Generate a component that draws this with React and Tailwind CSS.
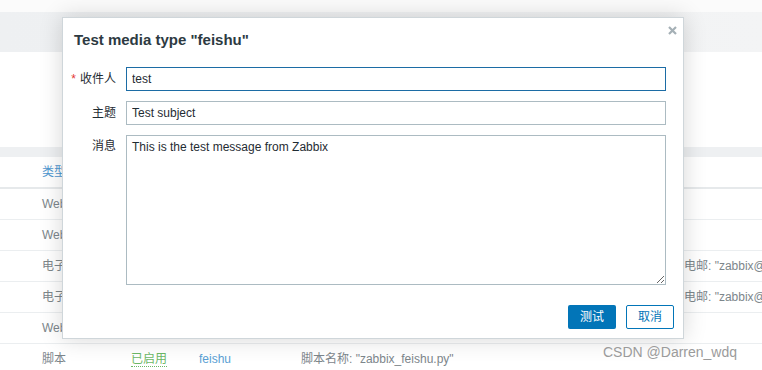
import React from "react";

const font = { fontFamily: '"Liberation Sans", Arial, "Noto Sans CJK SC", sans-serif' };

function Row({ type, status, name, detail, right }) {
  return (
    <div className="grid h-[31px] grid-cols-[89px_68px_102px_383px_1fr] items-center border-b border-[#ebeef0] pl-[42px] text-[12px] text-[#7d868b] whitespace-nowrap overflow-hidden">
      <div>{type}</div>
      <div>
        {status && (
          <span className="text-[#6cb866] border-b border-dotted border-[#6cb866] leading-[14px]">{status}</span>
        )}
      </div>
      <div className="text-[#5a9fd4]">{name}</div>
      <div>{detail}</div>
      <div className="overflow-hidden">{right}</div>
    </div>
  );
}

export default function App() {
  return (
    <div className="relative h-[370px] w-[762px] overflow-hidden bg-white" style={font}>
      {/* background page */}
      <div className="h-[12px] bg-[#fbfbfb]" />
      <div className="h-[40px] bg-gradient-to-r from-[#eef0f2] to-[#f3f4f5]" />
      <div className="h-[95px] bg-white" />
      <div className="h-[10px] bg-[#eef0f2]" />
      <div className="flex h-[32px] items-center border-b-2 border-[#e6e9eb] pl-[42px] text-[12px] text-[#4f97d0]">
        类型
      </div>
      <Row type="Webhook" />
      <Row type="Webhook" />
      <Row type="电子邮件" right={'电邮: "zabbix@example.com"'} />
      <Row type="电子邮件" right={'电邮: "zabbix@example.com"'} />
      <Row type="Webhook" />
      <Row type="脚本" status="已启用" name="feishu" detail={'脚本名称: "zabbix_feishu.py"'} />

      {/* modal */}
      <div className="absolute left-[62px] top-[17px] flex h-[322px] w-[622px] flex-col border border-[#cfd6da] bg-white shadow-[0_0_22px_rgba(0,0,0,0.16)]">
        <div className="relative px-[11px] pt-[13px]">
          <h4 className="text-[15px] font-bold leading-[18px] text-[#2d3a42]">Test media type "feishu"</h4>
          <button className="absolute right-[6px] top-[7px] flex h-[10px] w-[10px] items-center justify-center">
            <svg width="9" height="9" viewBox="0 0 9 9">
              <path d="M1 1L8 8M8 1L1 8" stroke="#a5b0b6" strokeWidth="2.2" />
            </svg>
          </button>
        </div>
        <div className="mt-[18px] grid grid-cols-[42px_540px] gap-x-[10px] gap-y-[10px] pl-[11px] text-[12px] text-[#1f2c33]">
          <label className="flex h-[24px] items-center justify-end whitespace-nowrap">
            <span className="mr-[4px] text-[#e33734]">*</span>收件人
          </label>
          <input
            defaultValue="test"
            className="h-[24px] border border-[#1c6ca5] px-[5px] text-[12px] text-[#1f2c33] outline-none"
            style={font}
          />
          <label className="flex h-[24px] items-center justify-end">主题</label>
          <input
            defaultValue="Test subject"
            className="h-[24px] border border-[#acbbc2] px-[5px] text-[12px] text-[#1f2c33] outline-none"
            style={font}
          />
          <label className="flex justify-end pt-[4px] leading-[14px]">消息</label>
          <textarea
            defaultValue="This is the test message from Zabbix"
            className="h-[150px] resize border border-[#acbbc2] px-[5px] py-[4px] text-[12px] leading-[14px] text-[#1f2c33] outline-none"
            style={font}
          />
        </div>
        <div className="mt-auto flex justify-end gap-[10px] px-[9px] pb-[9px]">
          <button className="h-[24px] w-[48px] rounded-[2px] bg-[#0275b8] text-[12px] text-white">测试</button>
          <button className="h-[24px] w-[48px] rounded-[2px] border border-[#0275b8] bg-white text-[12px] text-[#0275b8]">取消</button>
        </div>
      </div>

      {/* watermark */}
      <div className="absolute left-[603px] top-[343px] text-[14px] leading-[18px] text-[#9b9b9b]" style={{ fontFamily: '"Liberation Sans", Arial, sans-serif' }}>
        CSDN @Darren_wdq
      </div>
    </div>
  );
}
